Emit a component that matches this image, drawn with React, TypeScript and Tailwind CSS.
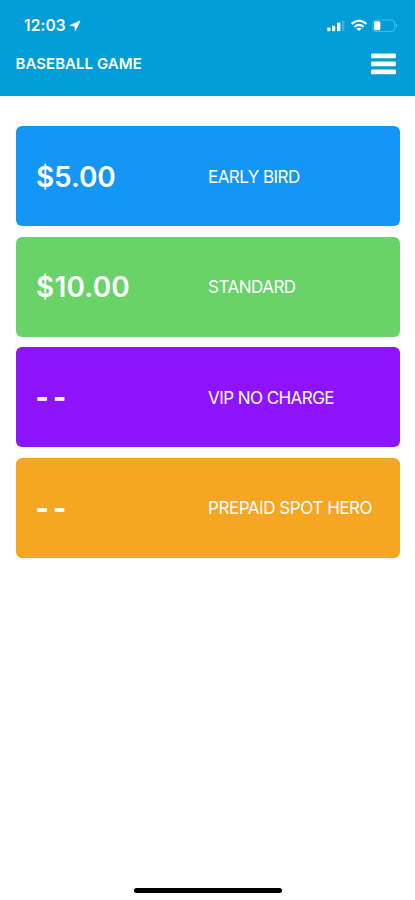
type Rate = { price: string; label: string; color: string; priceClass: string; labelClass: string };

const rates: Rate[] = [
  { price: "$5.00", label: "EARLY BIRD", color: "bg-[#1496f6]", priceClass: "font-semibold tracking-[-0.1px]", labelClass: "tracking-[-0.55px]" },
  { price: "$10.00", label: "STANDARD", color: "bg-[#69d269]", priceClass: "font-semibold tracking-[0.2px]", labelClass: "tracking-[-0.5px]" },
  { price: "- -", label: "VIP NO CHARGE", color: "bg-[#9013fe]", priceClass: "pb-[1px] font-extrabold tracking-[-0.9px] -ml-[0.6px] mr-[0.6px]", labelClass: "tracking-[-0.55px]" },
  { price: "- -", label: "PREPAID SPOT HERO", color: "bg-[#f5a623]", priceClass: "pb-[1px] font-extrabold tracking-[-0.9px] -ml-[0.6px] mr-[0.6px]", labelClass: "tracking-[-0.45px]" },
];

function StatusIcons() {
  return (
    <svg width="72" height="14" viewBox="0 0 72 14" fill="white">
      <rect x="0.3" y="8.4" width="3.2" height="3.8" rx="0.8" />
      <rect x="5" y="6.4" width="3.2" height="5.8" rx="0.8" />
      <rect x="10" y="3.4" width="3.4" height="8.8" rx="0.8" />
      <rect x="14.8" y="1.4" width="2.6" height="10.8" rx="0.8" opacity="0.22" />
      <g fill="none" stroke="white" strokeWidth="2.2">
        <path d="M24.6 4.9 Q32 -1.5 39.4 4.9" />
        <path d="M27.4 7.8 Q32 4.1 36.6 7.8" />
      </g>
      <path d="M29.3 9.6 Q32 7.7 34.7 9.6 L32 12.1Z" />
      <rect x="45.8" y="1" width="22" height="11.4" rx="3" fill="none" stroke="white" strokeOpacity="0.3" />
      <path d="M69.2 4.8 Q71.6 6.7 69.2 8.6Z" opacity="0.35" />
      <rect x="47" y="2.2" width="6.4" height="9" rx="1.5" />
    </svg>
  );
}

export default function App() {
  return (
    <div className="flex h-[900px] w-[415px] flex-col overflow-hidden bg-white font-['Inter',sans-serif] text-white">
      <header className="h-[95.5px] shrink-0 bg-[#009dd9]">
        <div className="flex h-[51px] items-center justify-between pr-[16px] pl-[24px]">
          <div className="flex items-center gap-[3.5px]">
            <span className="text-[15.5px] leading-5 font-semibold tracking-[0.1px]">12:03</span>
            <svg width="12" height="12" viewBox="0 0 12 12" fill="white" stroke="white" strokeWidth="0.7" strokeLinejoin="round">
              <path d="M11 0.9 L6.3 11 L5.8 6.1 L0.9 5.5Z" />
            </svg>
          </div>
          <StatusIcons />
        </div>
        <div className="flex h-[26px] items-center justify-between pr-[19px] pl-[15.5px]">
          <h1 className="text-[15px] leading-5 font-semibold tracking-[0.05px]">BASEBALL GAME</h1>
          <button aria-label="Menu" className="w-[25px]">
            <svg className="block" width="25" height="22" viewBox="0 0 25 22" fill="white">
              <rect y="0.4" width="25" height="4.8" rx="1.2" />
              <rect y="8.4" width="25" height="4.8" rx="1.2" />
              <rect y="16.4" width="25" height="4.8" rx="1.2" />
            </svg>
          </button>
        </div>
      </header>
      <main className="flex flex-1 flex-col gap-[10.5px] px-[15.5px] pt-[30.5px]">
        {rates.map((r) => (
          <button key={r.label} className={`flex h-[100px] w-[384.5px] items-center rounded-[6px] pt-[1px] pl-[20.5px] text-left ${r.color}`}>
            <span className={`w-[172px] text-[28px] leading-8 ${r.priceClass}`}>{r.price}</span>
            <span className={`text-[17px] leading-6 whitespace-nowrap ${r.labelClass}`}>{r.label}</span>
          </button>
        ))}
      </main>
      <footer className="flex justify-center pb-[7.5px]">
        <div className="h-[5px] w-[148px] rounded-full bg-black" />
      </footer>
    </div>
  );
}
